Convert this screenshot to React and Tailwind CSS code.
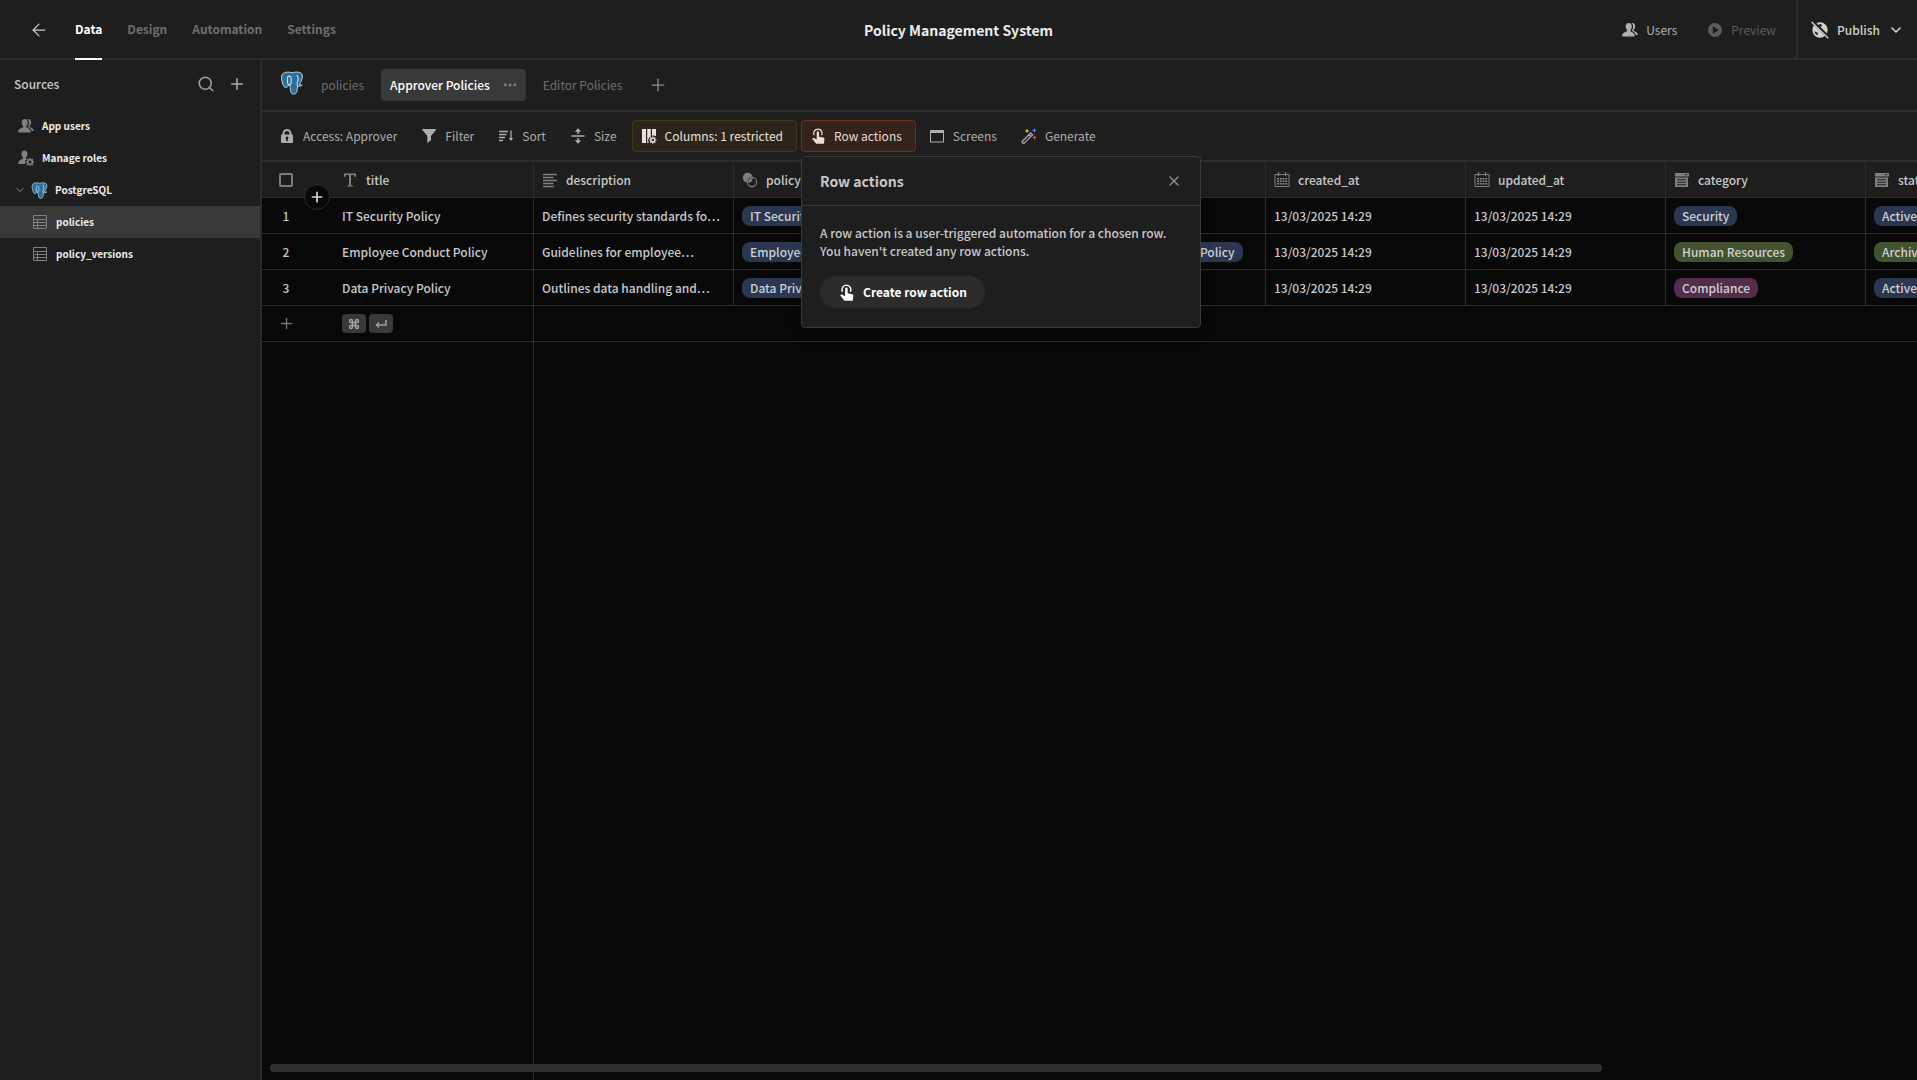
// src/App.jsx

import { ArrowLeft, ChevronDown, Plus, Search, X } from 'lucide-react';

const Icon = ({ className = 'w-4 h-4', children }) => (
  <svg viewBox="0 0 16 16" fill="currentColor" className={`shrink-0 ${className}`} aria-hidden="true">
    {children}
  </svg>
);

const PostgresIcon = ({ className }) => (
  <svg viewBox="0 0 24 24" className={`shrink-0 ${className}`} fill="none" stroke="#cfe0ea" aria-hidden="true">
    <path
      d="M12 1.800C9.500.8 4.500.6 2.300 3.200.8 5.500 1.500 9.500 3 13.500c.8 2 2 3.500 3.200 3 .9-.3 1.600-1.300 2.300-2 .6.5 1.300.6 1.800.6-.2 1.500.1 4.400.6 6 .5 1.700 2.200 2.400 3.800 1.800 1.700-.6 2.200-2 2.400-3.800l.4-3.800c1.700.2 3.500-.2 4.700-1.200-1 .1-2.200 0-2.900-.5 1.700-2.600 3.500-6.500 3-9.800C21.500 1 16.500.4 12 1.800z"
      fill="#2a6f9e"
      strokeWidth="0.9"
    />
    <path
      d="M8.500 14.500C7 12 7.500 8.500 7.600 6 8.500 4.500 10.500 5 11 6.500c.4 2-.2 4 .2 5.500-.4 1.500-1.700 2-2.700 2.500M17.500 15.300c-.6-1.800-.8-3.500.2-5 .8-1.300.3-4.200-.9-6.300"
      strokeWidth="1.1"
    />
  </svg>
);

const UsersIcon = ({ className }) => (
  <Icon className={className}>
    <path d="M6.800 1c-2 0-3.100 1.500-3.100 3.400 0 1.500.6 2.800 1.500 3.600v1.200C3.300 9.900.2 11 .2 13.500v1h12.400v-1c0-2.500-2.400-3.500-4.300-4.300V8c.9-.8 1.500-2.100 1.500-3.600C9.800 2.500 8.700 1 6.800 1z" />
    <path d="M9.300 1.100C11.500.5 13.200 2 13.200 4.300c0 1.700-.7 2.900-1.700 3.700v.7c1.900.8 4.200 1.600 4.300 4.300h-2.200c-.3-2.200-2-3.400-4-4.200 1-1.100 1.500-2.600 1.500-4.300 0-1.400-.6-2.700-1.800-3.400z" />
  </Icon>
);

const RolesIcon = ({ className }) => (
  <Icon className={className}>
    <path d="M6.500.5c-1.900 0-3 1.500-3 3.400 0 1.500.6 2.800 1.500 3.600v1.200C3.200 9.400.3 10.400.3 13v1h7a4.800 4.800 0 0 1 .9-5L8 8.600V7.500c.9-.8 1.500-2.100 1.500-3.600C9.500 2 8.400.5 6.500.5z" />
    <circle cx="12" cy="12" r="2.300" fill="none" stroke="currentColor" strokeWidth="1.500" />
    <path d="M12 7.700v2M12 14.300v2M7.700 12h2M14.300 12h2M9 9l1.300 1.300M13.700 13.700L15 15M15 9l-1.300 1.300M10.300 13.700L9 15" stroke="currentColor" strokeWidth="1.300" />
  </Icon>
);

const TableIcon = () => (
  <Icon className="w-4 h-4 text-[#808080]">
    <path d="M1.500 1.500h13v13h-13zM1.500 5.500h13M1.500 8.500h13M1.500 11.500h13M5.500 5.500v9" fill="none" stroke="currentColor" />
  </Icon>
);

const LockIcon = () => (
  <Icon>
    <path fillRule="evenodd" d="M3.500 6.500V5.500a4.500 4.500 0 0 1 9 0v1H13a1 1 0 0 1 1 1V14a1 1 0 0 1-1 1H3a1 1 0 0 1-1-1V7.500a1 1 0 0 1 1-1zm2 0h5v-1a2.500 2.500 0 0 0-5 0zM8 8.500a1.500 1.500 0 0 0-.8 2.700v2h1.600v-2A1.500 1.500 0 0 0 8 8.500z" />
  </Icon>
);

const FilterIcon = () => (
  <Icon>
    <path d="M1.500 1h13.200c.4 0 .5.400.3.700L10 8v4.300L6.300 15V8L1.200 1.700C1 1.400 1.100 1 1.500 1z" />
  </Icon>
);

const SortIcon = () => (
  <Icon>
    <path d="M1 3.500h9M1 6.500h7.500M1 9.500h6M1 12.500h4" stroke="currentColor" strokeWidth="1.400" />
    <path d="M13 2.500v9" stroke="currentColor" strokeWidth="1.300" />
    <path d="M10.800 10h4.400L13 13z" />
  </Icon>
);

const SizeIcon = () => (
  <Icon>
    <path d="M1.500 7.300h13v1.500h-13zM7.300 2.500h1.500V6H7.300zM7.300 10h1.500v3.500H7.300z" />
    <path d="M8 .2l3.200 3.500H4.800zM8 15.800l3.200-3.500H4.800z" />
  </Icon>
);

const ColumnsIcon = () => (
  <Icon>
    <path d="M1 1h4v14H1zM6.200 1h3.600v7.500a5 5 0 0 0-2 6.500H6.200zM11 1h4v7.200a5 5 0 0 0-4-.4z" />
    <circle cx="11.800" cy="12" r="1.900" fill="none" stroke="currentColor" strokeWidth="1.400" />
    <path d="M11.800 8.500v1.500M11.800 14v1.700M8.200 12h1.600M13.800 12h1.700M9.300 9.500l1.100 1.100M13.200 13.400l1.200 1.200M14.300 9.500l-1.100 1.100M10.400 13.400l-1.100 1.200" stroke="currentColor" strokeWidth="1.200" />
  </Icon>
);

const TouchIcon = ({ className }) => (
  <Icon className={className}>
    <path d="M4.200 7.300a4.200 4.200 0 1 1 7.400 0" fill="none" stroke="currentColor" strokeWidth="1.300" />
    <path d="M6.700 4.500a1.200 1.200 0 0 1 2.400 0v4.300l4.200.8c.8.2 1.200.8 1.100 1.600l-.5 4.600H6.200c-1.200-1.600-2.900-3.400-3.800-4.700-.4-.9.7-1.500 1.500-1l2.800 1.500z" />
  </Icon>
);

const ScreenIcon = () => (
  <Icon>
    <path fillRule="evenodd" d="M1 2h14v12.500H1zm1 3v8.500h12V5z" />
  </Icon>
);

const WandIcon = () => (
  <Icon>
    <path d="M1.400 13.200L9.700 4.900l1.900 1.900-8.300 8.300c-1.200.8-2.700-.7-1.900-1.900zM8 6.700l1.900 1.900" fill="none" stroke="currentColor" strokeWidth="1.300" />
    <path d="M6 .6l.7 1.700 1.700.7-1.700.7L6 5.400l-.7-1.700L3.600 3l1.700-.7z" fill="#e3c438" />
    <path d="M13.300 0l.7 1.700 1.900.7-1.900.7-.7 1.900-.7-1.900-1.900-.7 1.900-.7z" fill="#6d7fea" />
    <path d="M13.500 7l.7 1.900 1.700.6-1.700.7-.7 1.900-.7-1.900-1.700-.7 1.700-.6z" fill="#e8544e" />
  </Icon>
);

const TextIcon = () => (
  <Icon>
    <path d="M2 1.500h12V5h-1.200c-.2-1.400-.7-2-2-2H9v9.500c0 .8.4 1 1.800 1.100v.9H5.200v-.9c1.400-.1 1.800-.3 1.800-1.100V3H5.200c-1.300 0-1.800.6-2 2H2z" />
  </Icon>
);

const LongTextIcon = () => (
  <Icon>
    <path d="M1 2.500h14M1 5.500h10.500M1 8.500h14M1 11.500h10.500M1 14.500h11" stroke="currentColor" strokeWidth="1.400" />
  </Icon>
);

const RelationIcon = () => (
  <Icon>
    <circle cx="5.700" cy="5.700" r="4.900" />
    <circle cx="10" cy="10" r="5.400" fill="#1e1e1e" />
    <circle cx="10" cy="10" r="4.600" fill="none" stroke="currentColor" strokeWidth="1.100" />
    <path d="M10.600 6.200a4.600 4.600 0 0 1-4.500 4.500 4.600 4.600 0 0 1 4.500-4.500z" />
  </Icon>
);

const CalendarIcon = () => (
  <Icon>
    <path d="M1 2.500h14v12H1z" fill="none" stroke="currentColor" />
    <path d="M4.500 0v4M11.500 0v4" stroke="currentColor" strokeWidth="1.200" />
    <path d="M3 6h2v1.500H3zM5.800 6h2v1.500h-2zM8.500 6h2v1.500h-2zM11.200 6h2v1.500h-2zM3 8.500h2V10H3zM5.800 8.500h2V10h-2zM8.500 8.500h2V10h-2zM11.200 8.500h2V10h-2zM3 11h2v1.500H3zM5.800 11h2v1.500h-2zM8.500 11h2v1.500h-2zM11.200 11h2v1.500h-2z" />
  </Icon>
);

const OptionsIcon = () => (
  <Icon>
    <path fillRule="evenodd" d="M1 1h14v3.500H1zm9.500 1l1.500 1.600L13.500 2zM1 5.500h13V15H1zm2 1.700v1.100h9V7.200zm0 2.500v1.100h9V9.700zm0 2.500v1.100h9v-1.100z" />
  </Icon>
);

const GlobeOffIcon = () => (
  <Icon className="w-[18px] h-[18px]">
    <path fillRule="evenodd" d="M8 1.200a6.800 6.800 0 1 1 0 13.600A6.800 6.800 0 0 1 8 1.200zM7.800 2.600L6.600 4l1.600 1.200 1.600-.8L9 2.600zM3 9l1 2.500 1.900 1.300L6 10.500z" />
    <path d="M1 0l15 15" stroke="#1e1e1e" strokeWidth="3" />
    <path d="M.5.800l14.800 14.600" stroke="currentColor" strokeWidth="1.300" />
  </Icon>
);

const PlayIcon = () => (
  <Icon>
    <path fillRule="evenodd" d="M8 1a7 7 0 1 1 0 14A7 7 0 0 1 8 1zM5.800 4.300v7.400L12 8z" />
  </Icon>
);

const navTabs = ['Data', 'Design', 'Automation', 'Settings'];

const columns = [
  { name: 'title', icon: TextIcon, width: 'w-[200px]' },
  { name: 'description', icon: LongTextIcon, width: 'w-[200px]' },
  { name: 'policy_versions', icon: RelationIcon, width: 'w-[532px]' },
  { name: 'created_at', icon: CalendarIcon, width: 'w-[200px]' },
  { name: 'updated_at', icon: CalendarIcon, width: 'w-[200px]' },
  { name: 'category', icon: OptionsIcon, width: 'w-[200px]' },
  { name: 'status', icon: OptionsIcon, width: 'w-[200px]' },
];

const rows = [
  {
    title: 'IT Security Policy',
    description: 'Defines security standards fo…',
    versions: ['IT Security Policy'],
    category: ['Security', 'blue'],
    status: ['Active', 'blue'],
  },
  {
    title: 'Employee Conduct Policy',
    description: 'Guidelines for employee…',
    versions: ['Employee Conduct Policy', 'Employee Conduct Policy', 'Employee Conduct Policy'],
    category: ['Human Resources', 'green'],
    status: ['Archived', 'green'],
  },
  {
    title: 'Data Privacy Policy',
    description: 'Outlines data handling and…',
    versions: ['Data Privacy Policy'],
    category: ['Compliance', 'pink'],
    status: ['Active', 'blue'],
  },
];

const pillColors = {
  blue: 'bg-[#2b3650]',
  green: 'bg-[#43522f]',
  pink: 'bg-[#552d4c]',
};

const Pill = ({ color = 'blue', children }) => (
  <span className={`h-5 px-2 rounded-lg flex items-center whitespace-nowrap text-[#ccd0d4] ${pillColors[color]}`}>
    {children}
  </span>
);

const TopBar = () => (
  <header className="h-[60px] shrink-0 grid grid-cols-[1fr_auto_1fr] border-b-2 border-[#2c2c2c]">
    <div className="flex items-center pl-[29px]">
      <button aria-label="Back" className="mr-[26px] text-[#c8c8c8]">
        <ArrowLeft size={20} strokeWidth={1.5} />
      </button>
      <nav className="flex gap-[25px] h-[60px] self-start font-bold">
        {navTabs.map((tab) => (
          <a
            key={tab}
            href="#"
            className={`h-[60px] flex items-center border-b-2 ${
              tab === 'Data' ? 'text-white border-white' : 'text-[#6e6e6e] border-transparent'
            }`}
          >
            {tab}
          </a>
        ))}
      </nav>
    </div>
    <h1 className="flex items-center text-sm font-bold text-[#ececec]">Policy Management System</h1>
    <div className="flex justify-end">
      <button className="flex items-center gap-2 mr-[30px] text-[#b0b0b0]">
        <UsersIcon />
        Users
      </button>
      <button disabled className="flex items-center gap-2 mr-5 text-[#5c5c5c]">
        <PlayIcon />
        Preview
      </button>
      <button className="flex items-center gap-2 px-[13px] border-l-2 border-[#2c2c2c] font-medium text-[#d0d0d0]">
        <GlobeOffIcon />
        Publish
        <ChevronDown size={16} strokeWidth={2.5} />
      </button>
    </div>
  </header>
);

const Sidebar = () => (
  <aside className="w-[262px] shrink-0 border-r-2 border-[#2c2c2c]">
    <div className="h-[50px] px-[14px] pb-0.5 flex items-center text-[#c8c8c8]">
      <h2 className="flex-1 font-medium">Sources</h2>
      <button aria-label="Search" className="mr-[13px] text-[#a0a0a0]">
        <Search size={18} />
      </button>
      <button aria-label="Add source" className="text-[#b0b0b0]">
        <Plus size={18} />
      </button>
    </div>
    <nav className="text-[10px] font-bold text-[#ececec]">
      <a href="#" className="h-8 pl-[18px] flex items-center gap-2">
        <UsersIcon className="w-4 h-4 text-[#808080]" />
        App users
      </a>
      <a href="#" className="h-8 pl-[18px] flex items-center gap-2">
        <RolesIcon className="w-4 h-4 text-[#808080]" />
        Manage roles
      </a>
      <a href="#" className="h-8 pl-[14px] flex items-center">
        <ChevronDown size={12} className="mr-[5px] text-[#909090]" />
        <PostgresIcon className="w-[17px] h-[17px] mr-[7px]" />
        PostgreSQL
      </a>
      <a href="#" className="h-8 pl-8 flex items-center gap-2 bg-[#393939]">
        <TableIcon />
        policies
      </a>
      <a href="#" className="h-8 pl-8 flex items-center gap-2">
        <TableIcon />
        policy_versions
      </a>
    </nav>
  </aside>
);

const ViewTabs = () => (
  <div className="h-[52px] pl-[18px] flex items-center border-b-2 border-[#2c2c2c] text-[#6e6e6e]">
    <PostgresIcon className="w-6 h-6 mr-2 mb-1" />
    <div className="flex items-center gap-2">
      <a href="#" className="h-8 px-[9px] flex items-center">policies</a>
      <div className="h-8 px-[9px] flex items-center gap-[13px] rounded bg-[#393939]">
        <a href="#" className="font-medium text-white">Approver Policies</a>
        <button aria-label="View options" className="text-[#808080]">
          <Icon className="w-[14px] h-[14px]">
            <circle cx="2.500" cy="8" r="1.700" />
            <circle cx="8" cy="8" r="1.700" />
            <circle cx="13.500" cy="8" r="1.700" />
          </Icon>
        </button>
      </div>
      <a href="#" className="h-8 px-[9px] flex items-center">Editor Policies</a>
      <button aria-label="Add view" className="px-[9px] text-[#909090]">
        <Plus size={20} strokeWidth={1.5} />
      </button>
    </div>
  </div>
);

const ToolButton = ({ icon: ToolIcon, className = 'pr-[10px] border-transparent', children }) => (
  <button className={`h-8 pl-2 flex items-center gap-2 rounded border whitespace-nowrap ${className}`}>
    <ToolIcon />
    {children}
  </button>
);

const RowActionsPopover = () => (
  <div
    role="dialog"
    aria-label="Row actions"
    className="absolute top-9 left-0 z-20 w-[400px] rounded border border-[#3a3a3a] bg-[#1e1e1e] text-[#c8c8c8] shadow-lg"
  >
    <div className="h-[49px] px-[18px] flex items-center justify-between border-b border-[#3a3a3a]">
      <h3 className="text-sm font-bold">Row actions</h3>
      <button aria-label="Close" className="text-[#909090]">
        <X size={16} />
      </button>
    </div>
    <div className="px-[18px] pt-[18px] pb-[19px]">
      <p className="mb-4 leading-[18px] font-medium whitespace-nowrap">
        A row action is a user-triggered automation for a chosen row.
        <br />
        You haven't created any row actions.
      </p>
      <button className="h-8 px-[18px] flex items-center gap-2 rounded-full bg-[#2c2c2c] font-bold text-white">
        <TouchIcon className="w-[17px] h-[17px]" />
        Create row action
      </button>
    </div>
  </div>
);

const Toolbar = () => (
  <div className="h-[50px] pl-2 flex items-center gap-1 border-b-2 border-[#2c2c2c] text-[#adadad]">
    <ToolButton icon={LockIcon}>Access: Approver</ToolButton>
    <ToolButton icon={FilterIcon}>Filter</ToolButton>
    <ToolButton icon={SortIcon}>Sort</ToolButton>
    <ToolButton icon={SizeIcon}>Size</ToolButton>
    <ToolButton icon={ColumnsIcon} className="pr-[13px] bg-[#2b241b] border-[#423816] text-[#e8e3dc]">
      Columns: 1 restricted
    </ToolButton>
    <div className="relative">
      <ToolButton icon={TouchIcon} className="pr-[13px] bg-[#35221b] border-[#6a3320] text-[#e8dcd6]">
        Row actions
      </ToolButton>
      <RowActionsPopover />
    </div>
    <ToolButton icon={ScreenIcon}>Screens</ToolButton>
    <ToolButton icon={WandIcon}>Generate</ToolButton>
  </div>
);

const cell = 'h-9 p-0 pl-2 border-r border-b border-[#2c2c2c]';

const DataGrid = () => (
  <div className="relative flex-1 flex flex-col overflow-hidden bg-[#080808]">
    <table className="w-[1804px] shrink-0 table-fixed border-separate border-spacing-0 font-medium text-[#c8c8c8]">
      <thead className="bg-[#1e1e1e]">
        <tr>
          <th className="relative w-[72px] h-9 p-0 border-b border-[#2c2c2c]">
            <div className="w-12 flex justify-center">
              <input
                type="checkbox"
                aria-label="Select all rows"
                className="appearance-none w-[14px] h-[14px] rounded-[2px] border-2 border-[#7c7c7c]"
              />
            </div>
            <button
              aria-label="Insert row"
              className="absolute -bottom-[13px] left-[42px] z-10 w-[26px] h-[26px] flex items-center justify-center rounded-full border border-[#2c2c2c] bg-[#080808] text-[#d8d8d8]"
            >
              <Plus size={16} strokeWidth={2.5} />
            </button>
          </th>
          {columns.map(({ name, icon: ColumnIcon, width }) => (
            <th key={name} className={`${cell} ${width} text-left font-medium`}>
              <div className="flex items-center gap-2">
                <span className="text-[#808080]">
                  <ColumnIcon />
                </span>
                {name}
              </div>
            </th>
          ))}
        </tr>
      </thead>
      <tbody>
        {rows.map((row, idx) => (
          <tr key={row.title}>
            <td className="h-9 p-0 border-b border-[#2c2c2c]">
              <div className="w-12 text-center">{idx + 1}</div>
            </td>
            <td className={cell}>{row.title}</td>
            <td className={`${cell} whitespace-nowrap`}>{row.description}</td>
            <td className={cell}>
              <div className="flex gap-2">
                {row.versions.map((version, i) => (
                  <Pill key={i}>{version}</Pill>
                ))}
              </div>
            </td>
            <td className={cell}>13/03/2025 14:29</td>
            <td className={cell}>13/03/2025 14:29</td>
            <td className={cell}>
              <div className="flex">
                <Pill color={row.category[1]}>{row.category[0]}</Pill>
              </div>
            </td>
            <td className={cell}>
              <div className="flex">
                <Pill color={row.status[1]}>{row.status[0]}</Pill>
              </div>
            </td>
          </tr>
        ))}
        {/* New row */}
        <tr>
          <td className="h-9 p-0 border-b border-[#2c2c2c]">
            <button aria-label="Add row" className="w-12 flex justify-center text-[#707070]">
              <Plus size={17} />
            </button>
          </td>
          <td className={cell}>
            <div className="flex gap-[3px] text-[#a0a0a0]">
              <kbd className="w-6 h-[19px] flex items-center justify-center rounded bg-[#393939]">
                <svg viewBox="0 0 24 24" className="w-3 h-3" fill="none" stroke="currentColor" strokeWidth="3" aria-label="Command">
                  <path d="M15 6v12a3 3 0 1 0 3-3H6a3 3 0 1 0 3 3V6a3 3 0 1 0-3 3h12a3 3 0 1 0-3-3" />
                </svg>
              </kbd>
              <kbd className="w-6 h-[19px] flex items-center justify-center rounded bg-[#393939]">
                <svg viewBox="0 0 24 24" className="w-3 h-3" fill="none" stroke="currentColor" strokeWidth="3" aria-label="Enter">
                  <path d="M22 4v10H3M8 9l-5 5 5 5" />
                </svg>
              </kbd>
            </div>
          </td>
          <td colSpan={6} className="h-9 p-0 border-b border-[#2c2c2c]" />
        </tr>
      </tbody>
    </table>
    <div className="flex-1 w-[272px] border-r border-[#2c2c2c]" />
    {/* Horizontal scrollbar */}
    <div className="absolute left-2 bottom-2 w-[80.5%] h-2 rounded-full bg-[#303030]" />
  </div>
);

export default function App() {
  return (
    <div className="h-screen flex flex-col overflow-hidden bg-[#1e1e1e] font-['Noto_Sans_CJK_SC','Open_Sans',sans-serif] text-xs leading-5">
      <TopBar />
      <div className="flex-1 flex min-h-0">
        <Sidebar />
        <main className="flex-1 min-w-0 flex flex-col">
          <ViewTabs />
          <Toolbar />
          <DataGrid />
        </main>
      </div>
    </div>
  );
}
